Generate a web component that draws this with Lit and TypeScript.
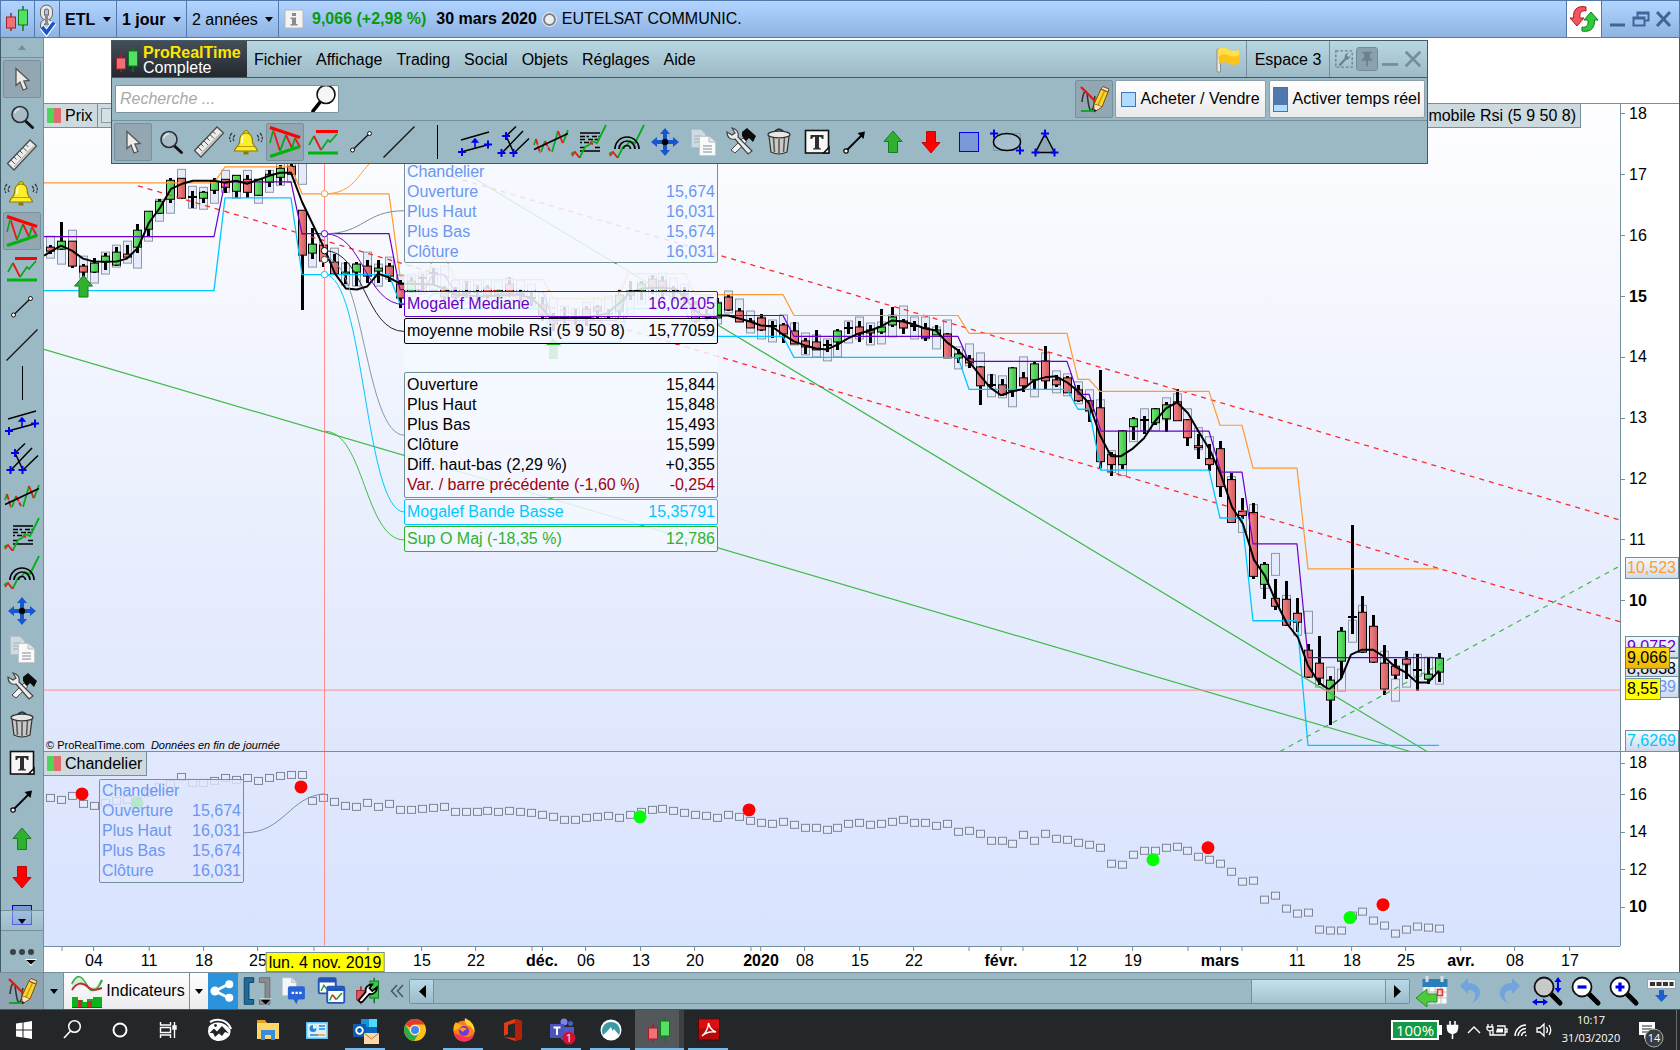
import { LitElement, html, svg, css, nothing } from "lit";
import type { SVGTemplateResult } from "lit";
import { customElement, property } from "lit/decorators.js";
import { classMap } from "lit/directives/class-map.js";

/* ------------------------------------------------------------------ */
/* Icons: every glyph is drawn in a 38 x 38 cell                        */
/* ------------------------------------------------------------------ */

const plus = (x: number, y: number) =>
  svg`<path d="M${x - 4} ${y}h8M${x} ${y - 4}v8" stroke="#0000f0" stroke-width="2" fill="none"/>`;

const pencil = svg`
  <path d="M7 22C8 12 11 8 12 14S14 33 17 30S19 18 20 16" fill="none" stroke="#333" stroke-width="1.5"/>
  <path d="M6 7L20 21" stroke="#f21414" stroke-width="2.4"/>
  <path d="M6 31H18" stroke="#12a52c" stroke-width="2"/>
  <path d="M19 24L26 9L33 12L27 27L19 32Z" fill="#ffd52e" stroke="#6b5412" stroke-width="1"/>
  <path d="M23 25L29.5 11" stroke="#c99a10" stroke-width="1.5"/>
  <path d="M26 9L28 6.5L34 9L33 12Z" fill="#f6d9c4" stroke="#6b5412"/>
  <path d="M19 24L23 25L27 27L19 32Z" fill="#fbe3c8" stroke="#6b5412" stroke-width=".7"/>
  <path d="M19 29L19 32L22 30.5Z" fill="#222"/>`;

const lens = (fill: string) => svg`
  <path d="M23 22L32 31" stroke="#000" stroke-width="5" stroke-linecap="round"/>
  <circle cx="16" cy="15" r="9.5" fill="${fill}" stroke="#111" stroke-width="1.8"/>`;

const candles = svg`
  <path d="M12 13V31" stroke="#a52025" stroke-width="1.5"/>
  <rect x="7.5" y="17" width="9" height="11" fill="#f0707a" stroke="#a52025"/>
  <path d="M24 6V31" stroke="#0a7a1c" stroke-width="1.5"/>
  <rect x="19.5" y="10" width="9" height="15" fill="#54e060" stroke="#0a7a1c"/>`;

const trendZig = svg`
  <path d="M2 33L5 29L9 34L11 34" fill="none" stroke="#f01818" stroke-width="1.8"/>
  <path d="M1 31L4 29M10 34L15 24L19 22L22 18L27 20L31 12L36 2" fill="none" stroke="#06ad18" stroke-width="1.8"/>`;

const ICONS: Record<string, SVGTemplateResult> = {
  cursor: svg`<path d="M13 8.5V25.5L17 22L20 30L24 28.5L20.8 21L26 20.5Z" fill="#ececec" stroke="#555" stroke-width="1.3"/>`,
  magnifier: svg`
    <path d="M22.5 23L29.5 29.5" stroke="#111" stroke-width="3" stroke-linecap="round"/>
    <circle cx="17" cy="16.5" r="8" fill="#a9bcc6" stroke="#2a2f33" stroke-width="1.6"/>
    <path d="M12 15Q13 11 17 11" stroke="#dfe9ee" stroke-width="1.5" fill="none"/>`,
  ruler: svg`
    <path d="M4.5 27.5L27 4L33.5 10L11 34Z" fill="#ececea" stroke="#4b4b4b" stroke-width="1.3"/>
    <path d="M8 24l4 4M11 21l2.5 2.5M14 18l4 4M17 15l2.5 2.5M20 11.5l4 4M23 8.5l2.5 2.5" stroke="#555" stroke-width="1"/>
    <path d="M11 31L31 10" stroke="#b9b9b5" stroke-width="1.5"/>`,
  bell: svg`
    <path d="M7 12Q4 15 6 18M4 10Q0 14.5 3 19M29 12Q32 15 30 18M32 10Q36 14.5 33 19" fill="none" stroke="#333" stroke-width="1.2" stroke-dasharray="3 1"/>
    <circle cx="18" cy="10" r="2.5" fill="#f5e11a" stroke="#8a7600"/>
    <path d="M18 10C12 10 11.5 15 11.5 19C11.5 23 7 24 6.5 28H29.5C29 24 24.5 23 24.5 19C24.5 15 24 10 18 10Z" fill="#fcee2b" stroke="#8f7a00" stroke-width="1.2"/>
    <path d="M10 23.5H26" stroke="#b79f00"/>
    <path d="M15.5 28.5h5v3h-5z" fill="#8f7a00"/>
    <path d="M15 13Q13.5 17 14 20" stroke="#fffbd0" stroke-width="2" fill="none"/>`,
  wedge: svg`
    <path d="M4 20L7 8L8.5 8" fill="none" stroke="#0aa51c" stroke-width="1.6"/>
    <path d="M8 9L14 28" stroke="#f01414" stroke-width="1.8"/>
    <path d="M14 28L20 12" stroke="#0aa51c" stroke-width="1.8"/>
    <path d="M20 12L26 25" stroke="#f01414" stroke-width="1.8"/>
    <path d="M26 25L29 15" stroke="#0aa51c" stroke-width="1.8"/>
    <path d="M29 15L34 24" stroke="#f01414" stroke-width="1.8"/>
    <path d="M4 4.5L34 14.5" stroke="#ff0000" stroke-width="3"/>
    <path d="M4 33.5L34 23.5" stroke="#00b410" stroke-width="3"/>`,
  levels: svg`
    <path d="M5 22L10 13" fill="none" stroke="#0aa51c" stroke-width="1.7"/>
    <path d="M10 13L17 27" stroke="#f01414" stroke-width="1.8"/>
    <path d="M17 27L24 17L26 19L33 11" fill="none" stroke="#0aa51c" stroke-width="1.7"/>
    <path d="M12 8.5H34" stroke="#ff0000" stroke-width="3"/>
    <path d="M4 30H34" stroke="#00b410" stroke-width="3"/>`,
  segment: svg`
    <path d="M10.5 27L27.5 10.5" stroke="#111" stroke-width="1.3"/>
    <circle cx="10.5" cy="27" r="2" fill="#fff" stroke="#111"/>
    <circle cx="27.5" cy="10.5" r="2" fill="#fff" stroke="#111"/>`,
  line: svg`<path d="M3.5 34.5L34.5 3.5" stroke="#111" stroke-width="1.2"/>`,
  vline: svg`<path d="M19.5 2V36" stroke="#000" stroke-width="1"/>`,
  channel: svg`
    <path d="M5 17L33 9M5 29L33 21.5" stroke="#000" stroke-width="1.5"/>
    <path d="M19 25V17M16.5 19L19 16L21.5 19Z" stroke="#0000f0" stroke-width="1.6" fill="#0000f0"/>
    ${plus(6, 29)}${plus(32, 21.5)}`,
  fork: svg`
    <path d="M12 13L22 3.5M8 30L29 8M20 30L35 15.5M12 13L20 30" stroke="#000" stroke-width="1.5"/>
    ${plus(12, 13)}${plus(7.5, 30)}${plus(19.5, 30)}`,
  regression: svg`
    <path d="M2 22L4 16M9 29L13 18M20 29L26 8M31 20L36 7" stroke="#06ad18" stroke-width="1.8" fill="none"/>
    <path d="M4 16L8 30M13 18L18 28M26 8L31 21" stroke="#f01818" stroke-width="1.8" fill="none" stroke-dasharray="6 1"/>
    <path d="M2 26.5L36 10.5" stroke="#000" stroke-width="1.6"/>`,
  retracement: svg`
    <path d="M10 10H30M10 28H30" stroke="#000" stroke-width="1.5"/>
    <path d="M10 13.5H19M22 13.5H30M10 16.5H16M18 16.5H30M10 19.5H12M14 19.5H22M10 24.5H15M25 24.5H30" stroke="#000" stroke-width="1.4" stroke-dasharray="5 1.5"/>
    ${trendZig}
    <path d="M20 20L23 21" stroke="#f01818" stroke-width="2"/>`,
  arcs: svg`
    ${trendZig}
    <path d="M7 26A12 12 0 0 1 31 26M11 26A8 8 0 0 1 27 26M15.5 26A3.5 3.5 0 0 1 22.5 26" fill="none" stroke="#000" stroke-width="1.7"/>`,
  move: svg`
    <g fill="#1657cf"><path d="M19 5l5 6h-3v5h-4v-5h-3z"/><path d="M19 33l5-6h-3v-5h-4v5h-3z"/>
    <path d="M5 19l6-5v3h5v4h-5v3z"/><path d="M33 19l-6-5v3h-5v4h5v3z"/></g>
    <circle cx="19" cy="19" r="3.2" fill="#000"/>`,
  copy: svg`
    <path d="M7.5 6.5H17L21.5 11V24.5H7.5Z" fill="#d0dbe1" stroke="#b4c1c8"/>
    <path d="M10 13h8M10 16h8M10 19h8" stroke="#9eb0ba"/>
    <path d="M15.5 13.5H25L31.5 19V32.5H15.5Z" fill="#fafafa" stroke="#c3c9cc"/>
    <path d="M25 13.5V19H31.5" fill="#e3e6e8" stroke="#b5bcc0"/>
    <path d="M19 23h9M19 26h9M19 29h9" stroke="#7f8a90" stroke-width="1.2"/>`,
  tools: svg`
    <path d="M13 30L9 27L21 15L25 18.5Z" fill="#f3f3f3" stroke="#444"/>
    <path d="M20 9L25 5L34 13L31 19L27 15L24 18L20 13Z" fill="#0c0c0c"/>
    <path d="M5 9C5 15 9 17 13 16L26 31L30 28L16 14C17 9 14 6 10 5L13 10L10 12Z" fill="#ececec" stroke="#444" stroke-width="1.2"/>`,
  trash: svg`
    <path d="M15 8.5Q19 4 23 8.5" fill="none" stroke="#333" stroke-width="2"/>
    <path d="M9 13L11 29Q19 33 27 29L29 13Z" fill="#c9c9c7" stroke="#333" stroke-width="1.2"/>
    <path d="M13.5 15l1 14M19 16v14.5M24.5 15l-1 14" stroke="#5a5a5a" stroke-width="1.6"/>
    <ellipse cx="19" cy="11.5" rx="11" ry="3.4" fill="#e6e6e4" stroke="#333" stroke-width="1.2"/>`,
  note: svg`
    <rect x="7.5" y="7.5" width="23" height="22.5" fill="#f7f7f7" stroke="#111" stroke-width="1.6"/>
    <path d="M25.5 30L31 24.5V30Z" fill="#fff" stroke="#111" stroke-width="1.6"/>
    <path d="M12.5 12H25.5V16H24Q23.5 13.8 21 13.8V24Q21 25.5 23 25.5V26.5H15V25.5Q17 25.5 17 24V13.8Q14.5 13.8 14 16H12.5Z" fill="#2e2e2e"/>`,
  arrow: svg`
    <path d="M10 28L26 12" stroke="#000" stroke-width="1.8"/>
    <path d="M21.5 10L29 8.5L27.5 16Z" fill="#000"/>
    <circle cx="10" cy="28" r="2.2" fill="#fff" stroke="#000" stroke-width="1.2"/>`,
  up: svg`<path d="M19 8L28 18.5H23.5V29.5H14.5V18.5H10Z" fill="#2fb02f" stroke="#1a7a24"/>`,
  down: svg`<path d="M19 30L10 19.5H14.5V8.5H23.5V19.5H28Z" fill="#ff0000" stroke="#c00808"/>`,
  square: svg`<rect x="9.5" y="9.5" width="19" height="19" fill="#7b98d8" stroke="#0000f0"/>`,
  ellipse: svg`
    <rect x="5.5" y="10.5" width="27" height="17" fill="none" stroke="#7f99a6"/>
    <ellipse cx="19" cy="19" rx="13.5" ry="8.5" fill="#a6bfce" stroke="#000" stroke-width="1.5"/>
    ${plus(6, 10.5)}${plus(32, 27.5)}`,
  triangle: svg`<path d="M19 11L28.5 29.5H9.5Z" fill="#8fa9b8" stroke="#000" stroke-width="1.5"/>
    ${plus(19, 10.5)}${plus(9.5, 29.5)}${plus(28.5, 29.5)}`,
  pencil,
  candles,
  link: svg`
    <g fill="none" stroke="#6a6a6a" stroke-width="5"><rect x="14.5" y="7" width="8" height="11" rx="4"/><rect x="14.5" y="21" width="8" height="10" rx="4"/></g>
    <g fill="none" stroke="#e6e6e6" stroke-width="3"><rect x="14.5" y="7" width="8" height="11" rx="4"/><rect x="14.5" y="21" width="8" height="10" rx="4"/></g>
    <path d="M18.5 14V25" stroke="#8a8a8a" stroke-width="3"/>
    <path d="M14 27L18.5 32.5L26 22.5" fill="none" stroke="#fff" stroke-width="6"/>
    <path d="M14 27L18.5 32.5L26 22.5" fill="none" stroke="#1757c8" stroke-width="3.6"/>`,
  info: svg`
    <rect x="10" y="10" width="18" height="18" fill="#f4f4f4" stroke="#b8b8b8"/>
    <path d="M17 13h4v3h-4zM15.5 17.5H21V24H22.5V25.5H15.5V24H17V19H15.5Z" fill="#8b8b8b"/>`,
  refresh: svg`
    <path d="M21 7C11 5 8 11 8.5 18H5L12 26L19 18H15C14.5 13 16 10 21 11Z" fill="#f4545c" stroke="#a81e28"/>
    <path d="M17 31C27 33 30 26 29.5 20H33L26 12L19 20H23C23.5 25 22 28 17 27Z" fill="#2ecb3a" stroke="#0e7c1c"/>`,
  flag: svg`
    <rect x="9" y="8" width="3.5" height="23" rx="1" fill="#e9e9e9" stroke="#8d8d8d"/>
    <path d="M10 8Q16 5 21 9Q26 11 31 9V22Q25 26 20 22Q16 20 11 23Z" fill="#fdc31a"/>
    <path d="M10 8Q16 5 21 9Q26 11 31 9V14Q25 17 20 14Q15 12 11 15Z" fill="#ffe04a"/>`,
  search: svg`
    <path d="M9 31L17 21" stroke="#000" stroke-width="3.6" stroke-linecap="round"/>
    <circle cx="22" cy="14.5" r="9" fill="#f6f6f6" stroke="#111" stroke-width="1.6"/>`,
  indicators: svg`
    <path d="M4 12C9 2 13 3 18 12S28 21 34 8" fill="none" stroke="#1fa03a" stroke-width="2"/>
    <path d="M4 12C9 2 13 3 18 12S28 21 34 8Q30 17 20 15S9 10 4 18Z" fill="#bfe8c4" opacity=".6"/>
    <path d="M4 18C9 10 14 10 20 15S30 17 34 16" fill="none" stroke="#c12b34" stroke-width="2"/>
    <path d="M4 25h6v3h5v2h4v-3h6v-2h9v10H4z" fill="#08b31b"/>
    <path d="M10 28h4v7h-4zM19 29h5v6h-5z" fill="#c92a2a"/>
    <path d="M4 35.5H34" stroke="#063"/>`,
  share: svg`
    <path d="M10 19L25 11.5M10 19L25 26.5" stroke="#fff" stroke-width="3"/>
    <circle cx="10" cy="19" r="5" fill="#fff"/><circle cx="26" cy="11.5" r="4.5" fill="#fff"/><circle cx="26" cy="26.5" r="4.5" fill="#fff"/>`,
  bracket: svg`
    <path d="M15 5H5V33H15V28H10V10H15Z" fill="#1c6d9c" stroke="#0d3f60"/>
    <path d="M21 5H32V33H21V28H27V10H21Z" fill="#8b8b8d" stroke="#6d6d70"/>
    <path d="M21 27H34L27.5 34Z" fill="#fff"/><path d="M22 28H33L27.5 33.5Z" fill="#000"/>`,
  chat: svg`
    <path d="M6 5H16L21 10V24H6Z" fill="#f4f6f8" stroke="#b9c3c9"/><path d="M16 5V10H21" fill="#dde3e8" stroke="#b9c3c9"/>
    <path d="M14 14Q12 14 12 16V26Q12 28 14 28H18L21 33L23 28H28Q30 28 30 26V16Q30 14 28 14Z" fill="#2864d8"/>
    <path d="M16 21h2.500M20 21h2.500M24 21h2.500" stroke="#fff" stroke-width="2.5"/>`,
  windows: svg`
    <rect x="5.5" y="5.5" width="18" height="16" rx="1.5" fill="#fff" stroke="#2354b8" stroke-width="2"/><path d="M5.5 8H23" stroke="#2354b8" stroke-width="4"/>
    <path d="M8 19L11 13L14 17" fill="none" stroke="#18a028" stroke-width="1.5"/>
    <rect x="14.5" y="14.5" width="18" height="17" rx="1.5" fill="#fff" stroke="#2354b8" stroke-width="2"/><path d="M14.5 17H32" stroke="#2354b8" stroke-width="4"/>
    <path d="M17 29L20 23" stroke="#18a028" stroke-width="1.6"/><path d="M20 23L24 28" stroke="#e02020" stroke-width="1.6"/><path d="M24 28L30 21" stroke="#18a028" stroke-width="1.6"/>`,
  candleWrench: svg`
    <path d="M11 14V33" stroke="#a52025" stroke-width="1.5"/><rect x="6.5" y="18.5" width="8" height="10" fill="#e05560" stroke="#a52025"/>
    <path d="M25 5V32" stroke="#0a7a1c" stroke-width="1.5"/><rect x="20.5" y="8.5" width="9" height="18" fill="#3cc94b" stroke="#0a7a1c"/>
    <path d="M28 15C28 20 24 23 20 22L13 30Q10 32 8.5 29L16 20C15 15 19 12 23 12L20 16L23 19Z" fill="#fafafa" stroke="#000" stroke-width="1.8"/>`,
  calendar: svg`
    <rect x="9" y="10" width="24" height="22" fill="#fafafa" stroke="#b3bcc2"/><rect x="8.5" y="7" width="25" height="8" fill="#2a7fbb"/>
    <path d="M13 4v6M28 4v6" stroke="#d6dde2" stroke-width="3"/>
    <path d="M9 20H33M9 26H33M15 15V32M21 15V32M27 15V32" stroke="#b9c0c5"/>
    <rect x="23.5" y="17.5" width="5" height="6" fill="none" stroke="#f03030" stroke-width="1.6"/>
    <path d="M2 26L13 17V22H23V30H13V35Z" fill="#4ecb3a" stroke="#2a8f24"/>`,
  undo: svg`<path d="M8 14L16 6V11C29 11 33 25 20 31C26 24 24 18 16 18V22Z" fill="#6a9fe0" opacity=".85"/>`,
  redo: svg`<path d="M30 14L22 6V11C9 11 5 25 18 31C12 24 14 18 22 18V22Z" fill="#6a9fe0" opacity=".85"/>`,
  zoomFit: svg`${lens("#c9c9c9")}
    <path d="M30 8V17M6 30H16" stroke="#0000f0" stroke-width="2"/>
    <path d="M26.5 10L30 5L33.5 10ZM26.5 16L30 21L33.5 16ZM9 26.5L4 30L9 33.5ZM15 26.5L20 30L15 33.5Z" fill="#0000f0"/>`,
  zoomOut: svg`${lens("#fff")}<path d="M11.5 15H20.5" stroke="#0000f0" stroke-width="3.2"/>`,
  zoomIn: svg`${lens("#fff")}<path d="M11.5 15H20.5M16 10.5V19.5" stroke="#0000f0" stroke-width="3.2"/>`,
  keyboard: svg`
    <rect x="5.5" y="7.5" width="28" height="9" fill="#f4f4f4" stroke="#9aa4aa"/>
    <path d="M8 12h5M14.5 12h5M21 12h5M27.5 12h4" stroke="#333" stroke-width="4"/>
    <path d="M17 18H22V23H26L19.5 30L13 23H17Z" fill="#1b61cc"/>`,
  start: svg`<path d="M11 12.5L17.5 11.5V18.5H11ZM18.5 11.4L27 10V18.5H18.5ZM11 19.5H17.5V26.5L11 25.5ZM18.5 19.5H27V28L18.5 26.6Z" fill="#fff"/>`,
  taskSearch: svg`<circle cx="21.5" cy="15.5" r="5.8" fill="none" stroke="#fff" stroke-width="1.5"/><path d="M17.5 20L11 27" stroke="#fff" stroke-width="1.6"/>`,
  cortana: svg`<circle cx="19" cy="19" r="6.5" fill="none" stroke="#fff" stroke-width="2"/>`,
  taskView: svg`<path d="M11.5 11V14H21.5V11M11.5 27V24H21.5V27M11.5 16.5H21.5V21.5H11.5ZM25.5 11V27M24 15h3v3h-3z" fill="none" stroke="#fff" stroke-width="1.4"/>`,
  photo: svg`
    <path d="M10 11Q15 8 20 9Q28 10 31 18" fill="none" stroke="#fff" stroke-width="2.2"/>
    <path d="M8.500 16Q12 11 19 11.500Q26 12 30.500 19Q31 24 27 27Q23 30.500 17 30Q9 28 8 21Z" fill="#fff"/>
    <path d="M9.500 22L14 17.500L17 20.500L22 15L29 22.500L25 21L22 25L19 22.500L15 26L13 22Z" fill="#22262a"/><circle cx="15.5" cy="14.5" r="1.4" fill="#22262a"/>`,
  folder: svg`
    <path d="M8 9H16L18 12H8Z" fill="#e0a21f"/><path d="M8 12H30V28H8Z" fill="#ffd668"/>
    <path d="M12 19H26V29H22V24H16V29H12Z" fill="#3a8ddb"/>`,
  control: svg`
    <rect x="8" y="11" width="22" height="17" fill="#5bc0f5"/><rect x="9.5" y="12.5" width="19" height="14" fill="#d9f1fd"/>
    <circle cx="15" cy="17.5" r="3.5" fill="#2b86cf"/><path d="M15 17.5V14A3.5 3.5 0 0 1 18.5 17.5Z" fill="#fff"/>
    <path d="M21 15h6M21 18h6M12 24h8" stroke="#2b86cf" stroke-width="1.5"/><path d="M20 24h7" stroke="#f39a1b" stroke-width="1.5"/>`,
  outlook: svg`
    <rect x="14" y="8" width="16" height="18" fill="#1490df"/><rect x="22" y="8" width="8" height="8" fill="#50d9ff"/><rect x="14" y="16" width="16" height="10" fill="#0b64b8"/>
    <rect x="6" y="13" width="13" height="13" fill="#0a5cad"/><circle cx="12.5" cy="19.5" r="3.3" fill="none" stroke="#fff" stroke-width="1.8"/>
    <rect x="17" y="22" width="15" height="11" fill="#fbd7a8"/><path d="M17 22L24.5 28L32 22" fill="none" stroke="#b97a3a"/>`,
  chrome: svg`
    <circle cx="19" cy="19" r="11" fill="#fbc116"/><path d="M19 8A11 11 0 0 1 28.5 13.5H19A5.5 5.5 0 0 0 14 16.5L9.5 13.5A11 11 0 0 1 19 8Z" fill="#e33b2e"/>
    <path d="M9.5 13.5A11 11 0 0 0 18 30L22.5 23A5 5 0 0 1 14 21Z" fill="#2da94f"/><circle cx="19" cy="19" r="5" fill="#fff"/><circle cx="19" cy="19" r="4" fill="#4285f4"/>`,
  firefox: svg`
    <circle cx="19" cy="20" r="10.5" fill="#ff7a1a"/><path d="M20 7Q31 12 29.5 22Q27 15 22 14Q19 11 20 7Z" fill="#ffd52e"/>
    <path d="M8.500 20Q8 14 11 11Q13 14 18 14L15 17Z" fill="#ffb01f"/>
    <path d="M9 22Q11 30.5 20 30.5Q28 30 29.5 22Q26 27 20 26Z" fill="#f5315c"/><circle cx="19" cy="20" r="5" fill="#6a3bd6"/>
    <path d="M14 18Q18 15 22 18Q19 19 18 21Z" fill="#ff9a1f"/>`,
  office: svg`
    <path d="M10 12L21 8L28 10V28L21 30L10 26L21 27V12L14 14V23L10 25Z" fill="#e33c10"/><path d="M21 8L28 10V28L21 30Z" fill="#b3200b"/>`,
  teams: svg`
    <circle cx="21" cy="11" r="3.5" fill="#7b83eb"/><circle cx="27.5" cy="12.5" r="2.5" fill="#5059c9"/>
    <path d="M17 16H31V24Q29 30 22 30Q17 29 17 24Z" fill="#5059c9"/><rect x="7" y="13" width="14" height="14" fill="#4b53bc"/>
    <path d="M10.5 16.5H17.5M14 16.5V24" stroke="#fff" stroke-width="2"/><circle cx="26" cy="27" r="6.5" fill="#d3122f"/>`,
  vpn: svg`<circle cx="19" cy="19" r="10.5" fill="#fff"/><path d="M11 24A9 9 0 1 1 27 24L22 18L20.5 20L19 16L14.5 21Z" fill="#3b9aa3"/>`,
  acrobat: svg`<rect x="8.5" y="8" width="21" height="21" fill="#b30b0b" stroke="#5d0505"/><rect x="9" y="8.5" width="20" height="9" fill="#dc1010"/>
    <path d="M12 25Q18 20 18.5 12Q20 19 26 21Q18 19.5 12 25Z" fill="none" stroke="#fff" stroke-width="1.4"/>`,
};

const icon = (name: string) =>
  html`<svg class="icon" viewBox="0 0 38 38" aria-hidden="true">${ICONS[name]}</svg>`;

const TOOLS: [string, string][] = [
  ["cursor", "Curseur"], ["magnifier", "Zoom"], ["ruler", "Règle"], ["bell", "Alerte"],
  ["wedge", "Figures"], ["levels", "Supports et résistances"], ["segment", "Segment"],
  ["line", "Droite"], ["vline", "Verticale"], ["channel", "Canal"], ["fork", "Fourchette"],
  ["regression", "Régression"], ["retracement", "Retracements"], ["arcs", "Arcs"],
  ["move", "Déplacer"], ["copy", "Dupliquer"], ["tools", "Propriétés"], ["trash", "Supprimer"],
  ["note", "Texte"], ["arrow", "Flèche"], ["up", "Flèche haussière"], ["down", "Flèche baissière"],
  ["square", "Rectangle"],
];
const EXTRA_TOOLS: [string, string][] = [["ellipse", "Ellipse"], ["triangle", "Triangle"]];
const ACTIVE = new Set(["cursor", "wedge"]);

const toolButtons = (list: [string, string][]) =>
  list.map(
    ([name, label]) => html`<button
      class=${classMap({ tool: true, on: ACTIVE.has(name) })}
      aria-label=${label}
    >${icon(name)}</button>`,
  );

/* ------------------------------------------------------------------ */
/* Chart data                                                           */
/* ------------------------------------------------------------------ */

type Bar = [string, number, number, number, number, number];

/* kind, body top, body bottom, wick top, wick bottom, centre of the averaged box */
const BARS: Bar[] = [
  ["r", 246, 250, 244, 252, 246], ["g", 240, 248, 221, 248, 252], ["r", 240, 265, 240, 266, 240],
  ["r", 265, 271, 263, 275, 266], ["g", 262, 271, 257, 271, 271], ["g", 255, 261, 252, 268, 262],
  ["g", 251, 264, 246, 264, 255], ["r", 253, 256, 244, 256, 251], ["g", 229, 246, 223, 251, 256],
  ["g", 210, 228, 210, 235, 229], ["g", 200, 212, 198, 212, 209], ["g", 179, 198, 177, 201, 201],
  ["r", 177, 197, 177, 197, 179], ["d", 195, 197, 190, 206, 196], ["g", 191, 197, 190, 201, 197],
  ["g", 180, 189, 177, 192, 191], ["r", 178, 186, 178, 191, 180], ["g", 174, 190, 174, 196, 186],
  ["r", 178, 191, 174, 196, 180], ["g", 178, 194, 178, 194, 191], ["g", 173, 181, 169, 185, 180],
  ["g", 167, 176, 164, 183, 173], ["r", 165, 173, 160, 173, 170], ["r", 209, 254, 209, 308, 172],
  ["g", 243, 252, 227, 257, 255], ["r", 244, 260, 244, 265, 245], ["r", 261, 273, 253, 273, 258],
  ["g", 271, 273, 261, 282, 273], ["g", 263, 271, 261, 284, 274], ["r", 265, 275, 259, 281, 262],
  ["g", 267, 270, 259, 281, 274], ["r", 265, 275, 262, 280, 267], ["r", 283, 297, 279, 306, 285],
  ["g", 280, 291, 276, 291, 284], ["d", 276, 278, 273, 288, 282], ["d", 271, 274, 267, 282, 278],
  ["r", 288, 296, 285, 298, 276], ["r", 291, 296, 286, 300, 290], ["d", 291, 293, 280, 296, 291],
  ["d", 290, 292, 284, 298, 290], ["r", 287, 294, 284, 297, 289], ["g", 289, 293, 288, 297, 291],
  ["r", 283, 292, 276, 295, 288], ["d", 292, 294, 288, 300, 290], ["d", 296, 298, 290, 304, 294],
  ["r", 304, 314, 296, 320, 302], ["r", 316, 323, 312, 330, 308], ["d", 316, 318, 306, 322, 316],
  ["d", 316, 318, 308, 324, 318], ["r", 308, 316, 305, 325, 312], ["r", 306, 310, 304, 318, 308],
  ["d", 312, 314, 308, 318, 306], ["g", 294, 310, 288, 316, 310], ["g", 290, 294, 280, 298, 302],
  ["g", 283, 290, 280, 298, 292], ["r", 278, 286, 274, 292, 286], ["r", 280, 290, 275, 296, 283],
  ["d", 290, 292, 285, 300, 288], ["d", 292, 294, 286, 302, 294], ["r", 303, 320, 300, 322, 302],
  ["d", 314, 316, 308, 320, 306], ["g", 302, 317, 297, 317, 312], ["r", 296, 309, 294, 309, 301],
  ["r", 310, 321, 307, 321, 309], ["r", 320, 327, 318, 327, 321], ["r", 317, 329, 314, 330, 327],
  ["d", 325, 327, 321, 337, 330], ["r", 324, 333, 323, 342, 325], ["r", 330, 343, 322, 343, 333],
  ["r", 340, 346, 338, 353, 343], ["r", 341, 349, 330, 349, 345], ["d", 344, 346, 340, 351, 349],
  ["g", 330, 341, 329, 349, 345], ["d", 327, 329, 322, 333, 331], ["r", 326, 333, 321, 341, 327],
  ["r", 329, 332, 325, 342, 333], ["g", 326, 331, 308, 333, 332], ["g", 316, 324, 306, 326, 325],
  ["r", 320, 327, 319, 333, 316], ["d", 325, 327, 321, 330, 327], ["r", 327, 337, 323, 340, 327],
  ["g", 329, 334, 325, 334, 337], ["r", 333, 357, 333, 357, 330], ["g", 353, 357, 349, 362, 357],
  ["r", 358, 362, 355, 367, 354], ["r", 366, 385, 366, 404, 363], ["d", 384, 386, 374, 386, 385],
  ["r", 384, 394, 379, 395, 386], ["g", 367, 390, 367, 396, 395], ["r", 377, 385, 372, 391, 367],
  ["g", 363, 379, 362, 389, 385], ["r", 360, 380, 346, 389, 363], ["r", 379, 384, 375, 386, 381],
  ["r", 377, 392, 376, 392, 384], ["r", 389, 400, 385, 401, 392], ["r", 400, 410, 400, 421, 400],
  ["r", 407, 461, 370, 467, 410], ["r", 454, 464, 452, 475, 461], ["g", 430, 464, 430, 468, 464],
  ["g", 418, 426, 417, 439, 430], ["d", 419, 421, 416, 433, 419], ["g", 408, 422, 408, 424, 419],
  ["g", 404, 418, 402, 431, 408], ["r", 401, 420, 389, 420, 404], ["r", 419, 437, 419, 445, 419],
  ["r", 445, 447, 434, 458, 438], ["r", 458, 464, 444, 470, 447], ["r", 448, 486, 441, 496, 462],
  ["r", 479, 522, 473, 522, 487], ["r", 511, 515, 498, 518, 521], ["r", 512, 576, 503, 578, 515],
  ["g", 564, 584, 562, 598, 577], ["r", 598, 606, 579, 609, 564], ["r", 599, 625, 581, 625, 606],
  ["r", 613, 622, 598, 631, 624], ["r", 650, 677, 644, 677, 622], ["r", 663, 678, 636, 684, 676],
  ["g", 680, 700, 676, 724, 678], ["g", 631, 661, 627, 677, 680], ["d", 616, 618, 525, 633, 631],
  ["r", 612, 652, 596, 652, 616], ["r", 626, 662, 615, 662, 645], ["r", 663, 689, 645, 694, 662],
  ["r", 666, 675, 659, 678, 690], ["r", 659, 664, 651, 678, 676], ["d", 669, 671, 654, 690, 665],
  ["g", 674, 679, 657, 683, 668], ["g", 658, 672, 653, 681, 673],
];

const barX = (i: number) => Math.round(50 + 10.937 * i);

const MA =
  "44,255 61,245 72,250 83,258 94,261 116,261 127,258 138,247 149,222 160,207 171,188 182,183 193,180 214,180 225,182 236,180 247,183 258,179 269,175 280,172 291,172 302,201 313,224 324,247 335,273 346,288 357,289 367,286 378,273 389,277 400,283 433,284 444,288 455,294 480,296 517,294 530,297 540,305 550,317 563,318 587,317 607,313 620,302 630,292 643,288 663,287 677,289 687,300 695,310 707,317 718,315 728,315 739,318 750,321 761,325 772,326 783,334 794,341 805,345 816,348 827,349 838,344 848,338 859,333 870,330 881,326 892,320 903,321 914,324 925,328 936,330 947,342 958,350 969,361 980,375 990,387 1001,395 1012,391 1023,389 1034,380 1045,377 1056,376 1067,382 1078,391 1089,403 1100,435 1111,456 1121,456 1132,449 1144,438 1155,421 1166,408 1177,402 1188,413 1199,432 1210,450 1221,475 1232,507 1243,524 1254,560 1265,576 1276,602 1287,624 1298,638 1308,666 1319,683 1329,690 1341,679 1351,655 1362,650 1373,650 1384,657 1395,667 1406,673 1417,683 1428,683 1439,671";
const UPPER =
  "44,182 214,182 225,166 291,166 302,193 389,193 400,275 427,275 433,258 446,258 455,279 543,279 553,298 618,298 628,273 685,273 695,294 783,294 794,315 958,315 969,333 1067,333 1078,379 1089,379 1100,391 1209,391 1220,425 1242,425 1253,468 1297,468 1308,569 1439,569";
const MEDIAN =
  "44,236 214,236 225,181 291,181 302,233 389,233 400,289 424,289 433,274 444,274 455,291 543,291 553,320 617,320 628,291 685,291 695,315 783,315 794,336 958,336 969,361 1067,361 1078,394 1089,394 1101,431 1209,431 1221,472 1242,472 1253,544 1297,544 1308,658 1439,658";
const LOWER =
  "44,290 214,290 225,197 291,197 302,274 389,274 400,303 424,303 433,293 444,293 455,308 543,308 553,342 620,342 628,308 685,308 695,336 783,336 794,357 958,357 969,389 1067,389 1078,409 1089,409 1101,470 1209,470 1220,518 1242,518 1253,621 1297,621 1308,746 1439,746";

/* plot rectangles in chart units */
const PRICE = { top: 103, height: 649 };
const SUB = { top: 752, height: 194 };
const pct = (y: number, box: { top: number; height: number }) => `${((y - box.top) / box.height) * 100}%`;
const priceY = (v: number) => 601 - (v - 10) * 61;
const subY = (v: number) => 907 - (v - 10) * 18.75;
const timeX = (x: number) => `${((x - 44) / 1576) * 100}%`;

const SIGNALS: [number, number, string][] = [
  [82, 794, "#ff0000"], [137, 803, "#00e000"], [301, 787, "#ff0000"], [640, 817, "#00ff00"],
  [749, 810, "#ff0000"], [1153, 860, "#00ff00"], [1208, 848, "#ff0000"], [1350, 918, "#00ff00"],
  [1383, 905, "#ff0000"],
];

const TIME: [number, string, boolean][] = [
  [94, "04", false], [149, "11", false], [204, "18", false], [258, "25", false], [422, "15", false],
  [476, "22", false], [542, "déc.", true], [586, "06", false], [641, "13", false], [695, "20", false],
  [761, "2020", true], [805, "08", false], [860, "15", false], [914, "22", false], [1001, "févr.", true],
  [1078, "12", false], [1133, "19", false], [1220, "mars", true], [1297, "11", false], [1352, "18", false],
  [1406, "25", false], [1461, "avr.", true], [1515, "08", false], [1570, "17", false],
];
const MINOR = [62, 314, 368, 532, 751, 969, 1023, 1188, 1242];

const OHLC: [string, string][] = [
  ["Ouverture", "15,674"], ["Plus Haut", "16,031"], ["Plus Bas", "15,674"], ["Clôture", "16,031"],
];
const DAY: [string, string, boolean?][] = [
  ["Ouverture", "15,844"], ["Plus Haut", "15,848"], ["Plus Bas", "15,493"], ["Clôture", "15,599"],
  ["Diff. haut-bas (2,29 %)", "+0,355"], ["Var. / barre précédente (-1,60 %)", "-0,254", true],
];

const rows = (list: [string, string, boolean?][]) =>
  list.map(([k, v, loss]) => html`<tr class=${loss ? "loss" : nothing}><th scope="row">${k}</th><td>${v}</td></tr>`);

const shared = css`
  :host { box-sizing: border-box; font-family: "Liberation Sans", Arial, sans-serif; font-size: 16px; color: #000; }
  * { box-sizing: border-box; }
  button, input, select { font: inherit; color: inherit; margin: 0; padding: 0; border: 0; background: none; border-radius: 0; }
  button { display: flex; align-items: center; justify-content: center; }
  .icon { width: 38px; height: 38px; display: block; flex: none; }
  .tool { width: 38px; height: 38px; border: 1px solid transparent; border-radius: 2px; flex: none; }
  .tool.on { background: #92a7b2; border-color: #7a909c; }
  .caret { width: 0; height: 0; border: 4px solid transparent; border-top: 5px solid #000; border-bottom: 0; flex: none; }
`;

/* ------------------------------------------------------------------ */
/* Title bar of the chart window                                        */
/* ------------------------------------------------------------------ */

@customElement("title-bar")
class TitleBar extends LitElement {
  static styles = [shared, css`
    :host { display: flex; height: 38px; background: linear-gradient(#b1d4ff, #8fb3e2); border: 1px solid #5179ab; flex: none; white-space: nowrap; }
    .cell { border-right: 1px solid #5179ab; display: flex; align-items: center; justify-content: center; overflow: hidden; }
    .logo { width: 34px; } .link { width: 25px; }
    .pick { display: grid; align-items: center; border-right: 1px solid #5179ab; }
    .pick select { grid-area: 1 / 1; appearance: none; height: 36px; padding: 0 20px 0 5px; }
    .pick .caret { grid-area: 1 / 1; justify-self: end; margin-right: 5px; pointer-events: none; }
    .bold { font-weight: bold; }
    .quote { display: flex; align-items: center; flex: 1; }
    .quote .icon { margin: 0 -1px 0 -4px; }
    .up { color: #089b0b; font-weight: bold; margin-right: 10px; }
    .dot { width: 13px; height: 13px; border-radius: 50%; border: 2px solid #808080; outline: 1px solid #e8eef6; background: #e9eef5; margin: 0 6px; }
    .sync { width: 36px; background: #fff; border-right: 1px solid #5179ab; border-left: 1px solid #5179ab; display: flex; justify-content: center; }
    .win { display: flex; align-items: center; gap: 4px; padding: 0 6px 0 6px; }
    .win svg { width: 19px; height: 20px; display: block; }
  `];
  render() {
    return html`
      <span class="cell logo">${icon("candles")}</span>
      <span class="cell link">${icon("link")}</span>
      <label class="pick bold"><select aria-label="Valeur"><option>ETL</option></select><span class="caret"></span></label>
      <label class="pick bold"><select aria-label="Unité de temps"><option>1 jour</option></select><span class="caret"></span></label>
      <label class="pick"><select aria-label="Historique"><option>2 années</option></select><span class="caret"></span></label>
      <div class="quote">
        ${icon("info")}
        <span class="up">9,066 (+2,98 %)</span><span class="bold">30 mars 2020</span>
        <span class="dot"></span><span>EUTELSAT COMMUNIC.</span>
      </div>
      <button class="sync" aria-label="Synchroniser">${icon("refresh")}</button>
      <div class="win">
        <button aria-label="Réduire"><svg viewBox="0 0 19 20"><path d="M2 16H17" stroke="#3f6697" stroke-width="3"/></svg></button>
        <button aria-label="Restaurer"><svg viewBox="0 0 19 20"><path d="M6.5 8V3.5H17.5V11.5H13.5M6.5 4.5H17.5M2.5 8.5H13.5V16.5H2.5ZM2.5 9.5H13.5" fill="none" stroke="#3f6697" stroke-width="2"/></svg></button>
        <button aria-label="Fermer"><svg viewBox="0 0 19 20"><path d="M3 3L16 17M16 3L3 17" stroke="#3f6697" stroke-width="3"/></svg></button>
      </div>`;
  }
}

/* ------------------------------------------------------------------ */
/* Floating main toolbar                                                */
/* ------------------------------------------------------------------ */

@customElement("main-panel")
class MainPanel extends LitElement {
  static styles = [shared, css`
    :host { display: block; background: #9bb8c5; border: 1px solid #3f5b68; white-space: nowrap; }
    .head { display: flex; height: 37px; background: linear-gradient(#b8d7e3, #9dbac6); border-bottom: 1px solid #3f5b68; }
    .brand { width: 135px; display: flex; align-items: center; background: linear-gradient(#454e58, #23282e); color: #fff; line-height: 15px; overflow: hidden; padding-top: 1px; }
    .brand .icon { margin-right: -4px; margin-left: -3px; }
    .brand b { color: #ffe600; display: block; }
    nav { display: flex; flex: 1; }
    nav button { padding: 2px 7px 0; }
    .side { display: flex; align-items: center; border-left: 1px solid #75909d; padding: 2px 6px 0; }
    .side.space { width: 83px; justify-content: center; }
    .side.win { padding: 0 4px; gap: 3px; }
    .side.win svg { width: 20px; height: 22px; display: block; }
    .side.win .pin { background: #8ba1ad; outline: 1px solid #738b97; border-radius: 2px; }
    .mid { display: flex; align-items: center; height: 43px; border-bottom: 1px solid #75909d; padding: 0 2px 0 3px; gap: 3px; }
    .find { display: flex; align-items: center; width: 224px; height: 28px; background: #fff; border: 1px solid #7b929e; overflow: hidden; border-radius: 2px; }
    .find input { flex: 1; min-width: 0; padding-left: 4px; outline: 0; }
    .find input::placeholder { color: #a9a9a9; font-style: italic; opacity: 1; }
    .find .icon { margin-right: -4px; }
    .grow { flex: 1; }
    .push { height: 38px; background: linear-gradient(#fff, #e9e9eb); border: 1px solid #8ba0ab; border-radius: 2px; padding: 0 3px; gap: 4px; }
    .edit { border: 1px solid #75909d; background: #92a7b2; width: 38px; height: 38px; border-radius: 2px; margin-right: -1px; }
    .order { width: 151px; } .live { width: 156px; }
    .sq { width: 15px; height: 15px; background: #b0dcff; border: 1px solid #4575ae; }
    .gauge { width: 15px; height: 25px; background: linear-gradient(#5078ae 17px, #b0dcff 17px); border: 1px solid #4575ae; }
    .tools { display: flex; padding: 2px; height: 42px; overflow: hidden; }
  `];
  render() {
    return html`
      <div class="head">
        <div class="brand">${icon("candles")}<span><b>ProRealTime</b>Complete</span></div>
        <nav>${["Fichier", "Affichage", "Trading", "Social", "Objets", "Réglages", "Aide"].map((m) => html`<button>${m}</button>`)}</nav>
        ${icon("flag")}
        <div class="side space">Espace 3</div>
        <div class="side win">
          <button aria-label="Ajuster"><svg viewBox="0 0 22 22"><rect x="2" y="2" width="18" height="18" fill="none" stroke="#6a828e" stroke-width="1.5" stroke-dasharray="3 2"/><path d="M5 17L12 10C11 7 13 4 16 4L14 7L16 9L18 7C18 10 16 12 13 12L7 19Z" fill="#6a828e"/></svg></button>
          <button class="pin" aria-label="Épingler"><svg viewBox="0 0 22 22"><path d="M6 3H16V5H14V9L17 12V13H12V19H10V13H5V12L8 9V5H6Z" fill="#6a828e"/></svg></button>
          <button aria-label="Réduire"><svg viewBox="0 0 22 22"><path d="M2 17H20" stroke="#758d99" stroke-width="3"/></svg></button>
          <button aria-label="Fermer"><svg viewBox="0 0 22 22"><path d="M3 3L19 19M19 3L3 19" stroke="#758d99" stroke-width="3"/></svg></button>
        </div>
      </div>
      <div class="mid">
        <label class="find"><input type="text" placeholder="Recherche ..." aria-label="Recherche" />${icon("search")}</label>
        <span class="grow"></span>
        <button class="edit" aria-label="Dessiner">${icon("pencil")}</button>
        <button class="push order"><span class="sq"></span>Acheter / Vendre</button>
        <button class="push live"><span class="gauge"></span>Activer temps réel</button>
      </div>
      <div class="tools">${toolButtons([...TOOLS, ...EXTRA_TOOLS])}</div>`;
  }
}

/* ------------------------------------------------------------------ */
/* Vertical drawing toolbar                                             */
/* ------------------------------------------------------------------ */

@customElement("side-tools")
class SideTools extends LitElement {
  static styles = [shared, css`
    :host { display: flex; flex-direction: column; width: 44px; flex: none; background: #9bb8c5; border-right: 1px solid #75909d; border-left: 1px solid #3f5b68; min-height: 0; }
    .more { height: 20px; border-bottom: 1px solid #75909d; flex: none; width: 100%; }
    .upward { border: 4px solid transparent; border-bottom: 5px solid #758d99; border-top: 0; }
    .list { flex: 1; min-height: 0; overflow: hidden; padding: 2px; }
    .scroll { margin-top: -21px; height: 21px; background: linear-gradient(#b8d7e399, #a0becb66); border-top: 1px solid #75909d; border-bottom: 1px solid #75909d; width: 100%; position: relative; }
    .scroll .caret { margin-top: 2px; }
    .others { height: 41px; flex: none; width: 100%; }
    .others svg { width: 42px; height: 41px; }
  `];
  render() {
    return html`
      <button class="more" aria-label="Monter"><span class="upward"></span></button>
      <div class="list">${toolButtons(TOOLS)}</div>
      <button class="scroll" aria-label="Descendre"><span class="caret"></span></button>
      <button class="others" aria-label="Autres outils">
        <svg viewBox="0 0 42 41"><g fill="#3a4146"><circle cx="12" cy="21" r="3"/><circle cx="21" cy="21" r="3"/><circle cx="30" cy="21" r="3"/></g><path d="M24 28H36L30 35Z" fill="#fff"/><path d="M25 29H35L30 33.5Z" fill="#000"/></svg>
      </button>`;
  }
}

/* ------------------------------------------------------------------ */
/* Price chart, lower indicator and time scale                          */
/* ------------------------------------------------------------------ */

@customElement("stock-chart")
class StockChart extends LitElement {
  @property({ type: Number }) cursor = 324;

  static styles = [shared, css`
    :host { display: flex; flex-direction: column; flex: 1; min-width: 0; background: #fff; border-right: 1px solid #3f5b68; }
    .blank { height: 65px; flex: none; }
    .pane { display: flex; min-height: 0; border-top: 1px solid #75909d; }
    .price { flex: 649 1 0; } .sub { flex: 194 1 0; }
    .plot { flex: 1; position: relative; overflow: hidden; min-width: 0; }
    .price .plot { background: linear-gradient(#fefeff, #dfe7fd); }
    .sub .plot { background: linear-gradient(#e1e8fe, #d8e3fe); }
    .plot > svg { position: absolute; inset: 0; width: 100%; height: 100%; display: block; }
    .axis { width: 59px; border-left: 1px solid #75909d; position: relative; flex: none; }
    .lab { position: absolute; left: 0; display: flex; align-items: center; gap: 4px; height: 20px; margin-top: -10px; }
    .lab::before { content: ""; width: 4px; height: 1px; background: #75909d; }
    .major { font-weight: bold; }
    .val { position: absolute; left: 4px; right: 0; height: 22px; line-height: 20px; padding-left: 1px; border: 1px solid #75909d; background: linear-gradient(#f6fafc, #cdd9ec); overflow: hidden; }
    .val.last { right: auto; background: linear-gradient(#ffdc1a, #f1b400); padding-right: 2px; border-color: #8c7a30; }
    .val.cross { right: auto; background: #ff0; padding-right: 2px; }
    .o { color: #ff9a2e; } .p { color: #6a00c8; } .c { color: #00c8ff; } .b { color: #6b97f0; }
    .tags { position: relative; display: flex; height: 24px; }
    .sub .tags { display: inline-flex; }
    .tag { display: flex; align-items: center; gap: 4px; background: #cddae0; border: 1px solid #75909d; border-top: 0; border-left: 0; padding: 0 4px 0 3px; white-space: nowrap; }
    .tag.study { flex: 1; overflow: hidden; margin-right: 39px; padding: 0 4px 0 3px; justify-content: space-between; }
    .sw { width: 14px; height: 15px; background: linear-gradient(90deg, #4fd65a 50%, #e06a6c 50%); flex: none; }
    .sw.empty { background: #d5dfe4; border: 1px solid #8a9aa3; }
    .legend { position: absolute; left: 2px; bottom: 0; font-size: 11px; line-height: 12px; white-space: nowrap; }
    .tips { position: absolute; left: 360px; top: 57px; width: 314px; display: flex; flex-direction: column; gap: 1px; }
    .tip { border: 1px solid #75909d; border-radius: 2px; background: #f5f8ffdb; padding: 0 1px; }
    .tip.day { padding: 2px 1px; } .tip.one { padding: 2px 1px; }
    .veil { height: 26px; background: #f5f8ffdb; }
    table { border-collapse: collapse; width: 100%; }
    th, td { padding: 0 1px; height: 20px; line-height: 20px; font-weight: normal; text-align: left; white-space: nowrap; }
    td { text-align: right; }
    .loss { color: #a00010; }
    .tip.p { border-color: #6a00c8; } .tip.k { border-color: #000; } .tip.c { border-color: #00c8ff; }
    .tip.g { border-color: #2db32d; color: #2db32d; }
    .tip.small { position: absolute; left: 55px; top: 27px; width: 145px; background: #dfe7fed0; padding: 1px; }
    .time { height: 26px; flex: none; display: flex; border-top: 1px solid #75909d; margin-right: 59px; }
    .scale { position: relative; flex: 1; }
    .t { position: absolute; top: 0; transform: translateX(-50%); display: flex; flex-direction: column; align-items: center; line-height: 20px; }
    .t::before { content: ""; width: 1px; height: 4px; background: #75909d; }
    .t.day { top: 5px; z-index: 1; height: 20px; line-height: 20px; padding: 0 2px; background: #ff0; border: 1px solid #75909d; white-space: nowrap; margin-left: 1px; }
    .t.day::before { display: none; }
  `];

  private bars() {
    return BARS.map(([kind, top, bottom, high, low, mid], i) => {
      const x = barX(i);
      const fill = kind === "g" ? "url(#gain)" : "url(#fall)";
      const body = kind === "d"
        ? svg`<rect x="${x - 4}" y="${top}" width="9" height="2" fill="#000"/>`
        : svg`<rect x="${x - 4 + 0.5}" y="${top + 0.5}" width="8" height="${Math.max(bottom - top, 2)}" fill="${fill}" stroke="#000"/>`;
      return svg`
        <rect x="${x - 4 + 0.5}" y="${mid - 10.5}" width="8" height="22" fill="#e4ebfb" stroke="#8f96a6"/>
        <rect x="${x - 1}" y="${high}" width="3" height="${low - high + 1}" fill="#000"/>${body}`;
    });
  }

  private link(y1: number, y2: number, color: string) {
    const x = this.cursor + 0.5;
    return svg`<path d="M${x} ${y1}C${x + 40} ${y1} ${x + 40} ${y2} ${x + 80} ${y2}" fill="none" stroke="${color}"/>`;
  }

  private ring(y: number, color: string) {
    return svg`<circle cx="${this.cursor + 0.5}" cy="${y}" r="3.2" fill="#fff" stroke="${color}"/>`;
  }

  private pricePlot() {
    const line = (points: string, color: string, w = 1.2) =>
      svg`<polyline points="${points}" fill="none" stroke="${color}" stroke-width="${w}" stroke-linejoin="round"/>`;
    const x = this.cursor + 0.5;
    return html`<svg viewBox="44 103 1576 649" preserveAspectRatio="none" role="img" aria-label="Cours ETL">
      <defs>
        <linearGradient id="gain"><stop offset="0" stop-color="#6fe873"/><stop offset="1" stop-color="#3cc245"/></linearGradient>
        <linearGradient id="fall"><stop offset="0" stop-color="#f28488"/><stop offset="1" stop-color="#d05a5e"/></linearGradient>
      </defs>
      <g shape-rendering="crispEdges">${this.bars()}</g>
      <path d="M44 349L1410 752M450 163L1427 752" stroke="#3fba46" fill="none" stroke-width="1.2"/>
      <path d="M1280 752L1620 566" stroke="#3fba46" stroke-dasharray="5 5" fill="none" stroke-width="1.2"/>
      <path d="M138 185L1620 622M405 162L1620 520" stroke="#ff2a2a" stroke-dasharray="5 5" fill="none" stroke-width="1.3"/>
      ${line(UPPER, "#ff9a2e")}${line(MEDIAN, "#6a00c8")}${line(LOWER, "#00c8ff", 1.3)}${line(MA, "#000", 2)}
      <path d="M83.5 275L92.5 285.5H88V296.5H79V285.5H74.5Z" fill="#2fb02f" stroke="#1a7a24"/>
      <path d="M553.5 338L562.5 346H558V358.5H549V346H544.5Z" fill="#2fb02f"/>
      <path d="M${x} 103V752M44 690.5H1620" stroke="#ff8e8e" fill="none"/>
      <path d="M${x} 193C350 193 356 178 369 163" stroke="#ff9a2e" fill="none"/>
      ${this.link(233, 210, "#75909d")}${this.link(233, 304, "#6a00c8")}${this.link(250, 331, "#222")}
      ${this.link(257, 435, "#8599a4")}${this.link(274, 512, "#00c8ff")}${this.link(431, 540, "#3fba46")}
      ${this.ring(193, "#ff9a2e")}${this.ring(233, "#6a00c8")}${this.ring(259, "#444")}${this.ring(250, "#000")}${this.ring(274, "#00c8ff")}
    </svg>`;
  }

  private subPlot() {
    const x = this.cursor + 0.5;
    return html`<svg viewBox="44 752 1576 194" preserveAspectRatio="none" role="img" aria-label="Chandelier">
      ${BARS.map(([, , , , , mid], i) => {
        const y = Math.round(907 - (601 - mid) * 0.307);
        return svg`<rect x="${barX(i) - 3.5}" y="${y - 3.5}" width="8" height="7" fill="#e3eafc" stroke="#7d8595"/>`;
      })}
      <path d="M${x} 752V946" stroke="#ff8e8e"/>
      <path d="M244 833C284 833 290 796 ${x} 794" fill="none" stroke="#75909d"/>
      ${SIGNALS.map(([cx, cy, color]) => svg`<circle cx="${cx}" cy="${cy}" r="6.5" fill="${color}"/>`)}
    </svg>`;
  }

  render() {
    const prices = [18, 17, 16, 15, 14, 13, 12, 11, 10];
    return html`
      <div class="blank"></div>
      <section class="pane price">
        <div class="plot">
          ${this.pricePlot()}
          <div class="tags">
            <span class="tag"><span class="sw"></span>Prix</span>
            <span class="tag study"><span class="sw empty"></span><span>moyenne mobile Rsi (5 9 50 8)</span></span>
          </div>
          <div class="tips">
            <div class="tip b"><table><tr><th scope="col" colspan="2">Chandelier</th></tr>${rows(OHLC)}</table></div>
            <div class="veil"></div>
            <div class="tip one p"><table>${rows([["Mogalef Mediane", "16,02105"]])}</table></div>
            <div class="tip one k"><table>${rows([["moyenne mobile Rsi (5 9 50 8)", "15,77059"]])}</table></div>
            <div class="veil"></div>
            <div class="tip day"><table>${rows(DAY)}</table></div>
            <div class="tip one c"><table>${rows([["Mogalef Bande Basse", "15,35791"]])}</table></div>
            <div class="tip one g"><table>${rows([["Sup O Maj (-18,35 %)", "12,786"]])}</table></div>
          </div>
          <div class="legend">© ProRealTime.com&nbsp; <i>Données en fin de journée</i></div>
        </div>
        <div class="axis">
          ${prices.map((v) => html`<span class="lab ${v % 5 ? "" : "major"}" style="top:${pct(priceY(v), PRICE)}">${v}</span>`)}
          <span class="val o" style="top:${pct(557, PRICE)}">10,523</span>
          <span class="val p" style="top:${pct(636, PRICE)}">9,0752</span>
          <span class="val" style="top:${pct(658, PRICE)}">8,8838</span>
          <span class="val b" style="top:${pct(676, PRICE)}">8,5739</span>
          <span class="val last" style="top:${pct(647, PRICE)}">9,066</span>
          <span class="val cross" style="top:${pct(678, PRICE)}">8,55</span>
          <span class="val c" style="top:${pct(730, PRICE)}">7,6269</span>
        </div>
      </section>
      <section class="pane sub">
        <div class="plot">
          ${this.subPlot()}
          <div class="tags"><span class="tag"><span class="sw"></span>Chandelier</span></div>
          <div class="tip small b"><table><tr><th scope="col" colspan="2">Chandelier</th></tr>${rows(OHLC)}</table></div>
        </div>
        <div class="axis">
          <span class="lab" style="top:${pct(763, SUB)}">18</span>
          ${[16, 14, 12, 10].map((v) => html`<span class="lab ${v % 5 ? "" : "major"}" style="top:${pct(subY(v), SUB)}">${v}</span>`)}
        </div>
      </section>
      <div class="time"><div class="scale">
        ${TIME.map(([x, label, major]) => html`<span class="t ${major ? "major" : ""}" style="left:${timeX(x)}">${label}</span>`)}
        ${MINOR.map((x) => html`<span class="t" style="left:${timeX(x)}"></span>`)}
        <span class="t day" style="left:${timeX(this.cursor)}">lun. 4 nov. 2019</span>
      </div></div>`;
  }
}

/* ------------------------------------------------------------------ */
/* Bottom toolbar                                                       */
/* ------------------------------------------------------------------ */

@customElement("bottom-bar")
class BottomBar extends LitElement {
  static styles = [shared, css`
    :host { display: flex; height: 38px; flex: none; background: #9bb8c5; border-top: 1px solid #75909d; border-bottom: 1px solid #3f5b68; align-items: center; }
    .edit { width: 44px; height: 36px; background: #8fa5b1; border-right: 1px solid #75909d; overflow: hidden; }
    .drop { width: 19px; height: 36px; }
    .ind { width: 127px; height: 36px; background: linear-gradient(#fff, #ebebed); border-left: 1px solid #75909d; border-right: 1px solid #75909d; overflow: hidden; }
    .drop.light { width: 18px; background: linear-gradient(#fff, #ebebed); }
    .share { width: 30px; height: 36px; background: #2b93dc; overflow: hidden; }
    .share .icon { width: 34px; height: 34px; }
    .few { display: flex; padding-left: 1px; }
    .few .icon { width: 37px; height: 36px; }
    .less { width: 20px; height: 36px; margin-right: 2px; }
    .less svg { width: 14px; height: 14px; }
    .bar { flex: 1; height: 25px; display: flex; border: 1px solid #75909d; border-radius: 2px; margin-right: 4px; }
    .bar button { width: 24px; background: linear-gradient(#b8d9e6, #9dbcc9); }
    .bar .l { border-right: 1px solid #75909d; } .bar .r { border-left: 1px solid #75909d; }
    .bar svg { width: 8px; height: 13px; }
    .track { flex: 817; } .thumb { flex: 133; background: linear-gradient(#c2e1ed, #a3c2ce); border-left: 1px solid #75909d; }
    .view { display: flex; }
  `];
  render() {
    return html`
      <button class="edit" aria-label="Dessiner">${icon("pencil")}</button>
      <button class="drop" aria-label="Options de dessin"><span class="caret"></span></button>
      <button class="ind">${icon("indicators")}Indicateurs</button>
      <button class="drop light" aria-label="Liste des indicateurs"><span class="caret"></span></button>
      <button class="share" aria-label="Partager">${icon("share")}</button>
      <div class="few">${["bracket", "chat", "windows", "candleWrench"].map((n) => html`<button aria-label=${n}>${icon(n)}</button>`)}</div>
      <button class="less" aria-label="Replier"><svg viewBox="0 0 14 14"><path d="M7 1L1.5 7L7 13M13 1L7.5 7L13 13" fill="none" stroke="#4b5a62" stroke-width="1.6"/></svg></button>
      <div class="bar">
        <button class="l" aria-label="Reculer"><svg viewBox="0 0 8 13"><path d="M8 0V13L1 6.5Z"/></svg></button>
        <span class="track"></span><span class="thumb"></span>
        <button class="r" aria-label="Avancer"><svg viewBox="0 0 8 13"><path d="M0 0V13L7 6.5Z"/></svg></button>
      </div>
      <div class="view">${["calendar", "undo", "redo", "zoomFit", "zoomOut", "zoomIn", "keyboard"].map((n) => html`<button aria-label=${n}>${icon(n)}</button>`)}</div>`;
  }
}

/* ------------------------------------------------------------------ */
/* Desktop task bar                                                     */
/* ------------------------------------------------------------------ */

const SYSTEM = ["start", "taskSearch", "cortana", "taskView"];
const APPS: [string, boolean, boolean][] = [
  ["photo", false, false], ["folder", false, false], ["control", false, false], ["outlook", true, false],
  ["chrome", false, false], ["firefox", true, false], ["office", false, false], ["teams", true, false],
  ["vpn", true, false], ["candles", true, true], ["acrobat", true, false],
];

@customElement("task-bar")
class TaskBar extends LitElement {
  static styles = [shared, css`
    :host { display: flex; height: 40px; flex: none; background: #23272a; color: #fff; font-family: "Open Sans", "Noto Sans", sans-serif; }
    .sys button { width: 48px; height: 40px; }
    .sys, .apps { display: flex; }
    .apps { padding-left: 2px; flex: 1; }
    .apps button { width: 49px; height: 40px; position: relative; }
    .apps button.run::after { content: ""; position: absolute; left: 4px; right: 5px; bottom: 0; height: 2px; background: #76b9ed; }
    .apps button.now { background: linear-gradient(90deg, #55585b 44px, #3d4043 44px); }
    .apps button.now::after { left: 0; right: 0; }
    .badge { position: absolute; left: 25px; top: 20px; width: 14px; font-size: 11px; line-height: 15px; text-align: center; }
    .tray { display: flex; align-items: center; }
    .batt { display: flex; align-items: center; }
    .batt span { border: 2px solid #fff; background: #149a44; width: 48px; height: 20px; font-size: 15px; line-height: 16px; text-align: center; }
    .batt::after { content: ""; width: 3px; height: 10px; background: #fff; }
    .tray .status { width: 118px; height: 40px; display: block; }
    .clock { font-size: 11px; line-height: 18px; text-align: center; width: 62px; padding-bottom: 2px; white-space: nowrap; }
    .notes { width: 54px; height: 40px; position: relative; }
    .notes svg { width: 54px; height: 40px; display: block; }
    .notes span { position: absolute; left: 23px; top: 20px; width: 18px; text-align: center; font-size: 11px; line-height: 16px; }
    .peek { width: 4px; height: 40px; border-left: 1px solid #6b6e70; }
  `];
  render() {
    return html`
      <div class="sys">${SYSTEM.map((n) => html`<button aria-label=${n}>${icon(n)}</button>`)}</div>
      <div class="apps">${APPS.map(([n, run, now]) => html`<button class=${classMap({ run, now })} aria-label=${n}>${icon(n)}${n === "teams" ? html`<span class="badge">1</span>` : nothing}</button>`)}</div>
      <div class="tray">
        <div class="batt"><span>100%</span></div>
        <svg class="status" viewBox="0 0 118 40" fill="none" stroke="#fff" stroke-width="1.4">
          <path d="M8 11V15M13 11V15M5.5 15.5H15.5V18Q15 23 10.5 23.5Q6 23 5.5 18ZM10.5 23V29" fill="#fff" stroke-width="1.6"/>
          <path d="M26 23L32 17L38 23"/>
          <path d="M51 18V25H63V16H55M63 19h2v3h-2M46 14v3M50 14v3M45 17h6v2q-1 2-3 2t-3-2zM48 21v4h3" stroke-width="1.3"/>
          <path d="M55 18.5H61V22.5H54Z" fill="#fff" stroke="none"/>
          <path d="M73 26A11 11 0 0 1 84 15M76 26A8 8 0 0 1 84 18.5M79.5 26A4.500 4.500 0 0 1 84 22M83 25.5h1.500"/>
          <path d="M95 18H98L102 14V26L98 22H95ZM104.500 17Q106.500 20 104.500 23M107 15Q110.500 20 107 25" stroke-width="1.3"/>
        </svg>
        <div class="clock"><div>10:17</div><div>31/03/2020</div></div>
        <button class="notes" aria-label="Notifications"><svg viewBox="0 0 54 40"><path d="M17 12H33V25H26L22 29V25H17Z" fill="#fff"/><path d="M20 16H30M20 19H30M20 22H26" stroke="#23272a"/><circle cx="32" cy="28" r="9" fill="#3a3d40" stroke="#aaa"/></svg><span>14</span></button>
        <span class="peek"></span>
      </div>`;
  }
}

/* ------------------------------------------------------------------ */
/* Application shell                                                    */
/* ------------------------------------------------------------------ */

@customElement("app-root")
class AppRoot extends LitElement {
  static styles = css`
    :host { display: flex; flex-direction: column; height: 100vh; min-height: 700px; position: relative; overflow: hidden; background: #fff; }
    .body { display: flex; flex: 1; min-height: 0; }
    main-panel { position: absolute; left: 111px; right: 252px; top: 40px; z-index: 2; }
  `;
  render() {
    return html`
      <title-bar></title-bar>
      <div class="body"><side-tools></side-tools><stock-chart></stock-chart></div>
      <main-panel></main-panel>
      <bottom-bar></bottom-bar>
      <task-bar></task-bar>`;
  }
}
